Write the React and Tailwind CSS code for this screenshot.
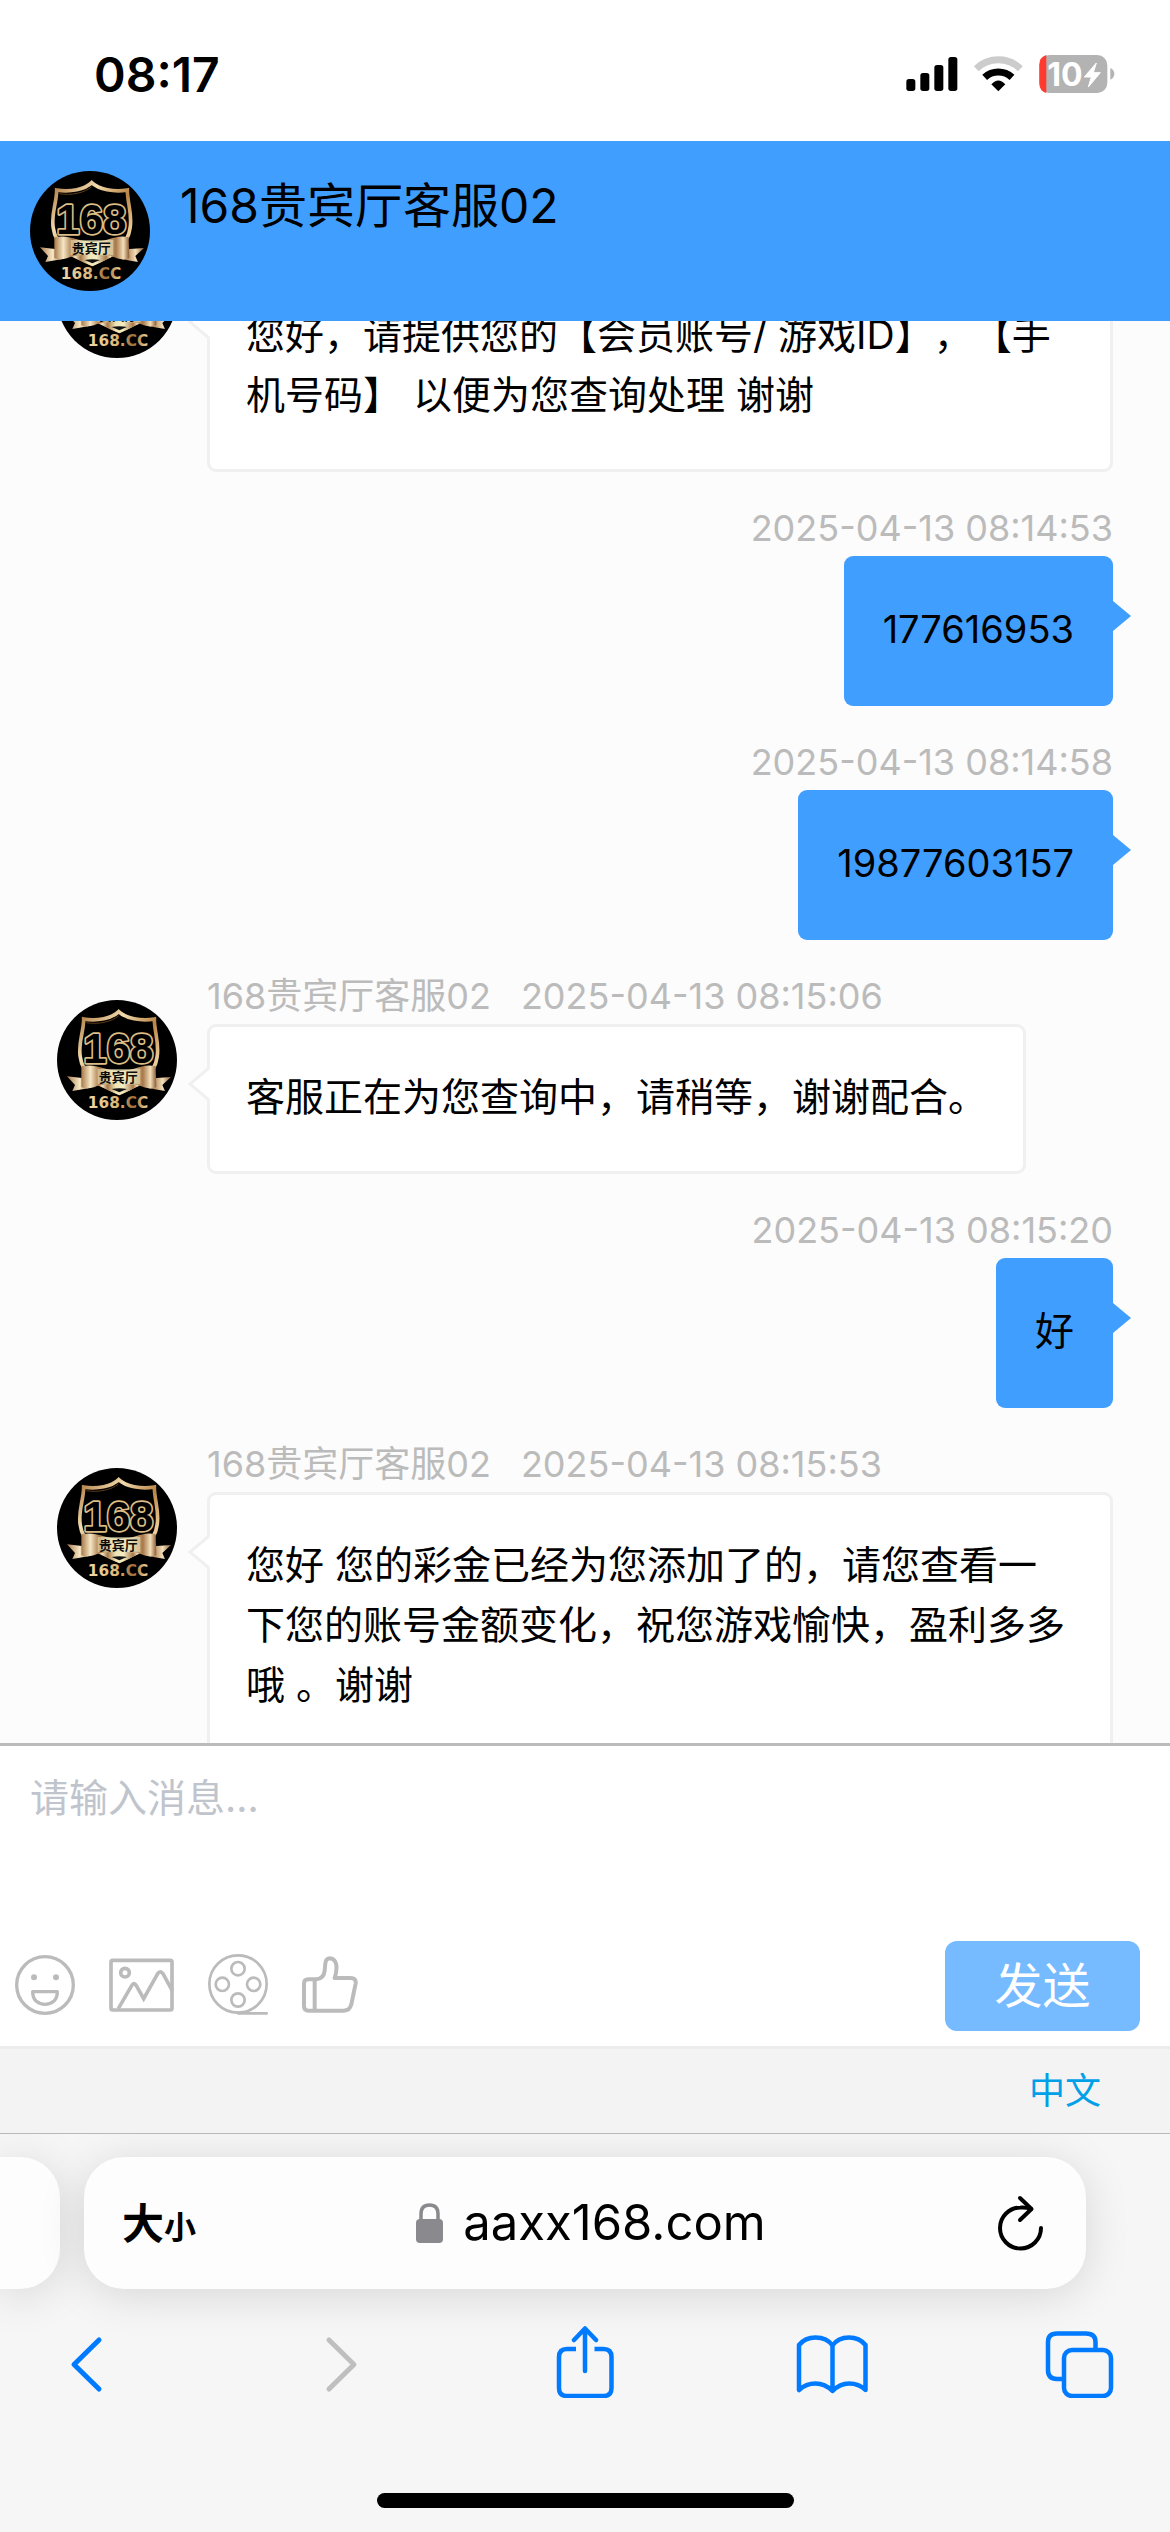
import React from "react";

const messages = [
  {
    from: "agent",
    time: "2025-04-13 08:14:41",
    text: "您好，请提供您的【会员账号/ 游戏ID】，【手机号码】 以便为您查询处理 谢谢",
  },
  { from: "me", time: "2025-04-13 08:14:53", text: "177616953" },
  { from: "me", time: "2025-04-13 08:14:58", text: "19877603157" },
  { from: "agent", time: "2025-04-13 08:15:06", text: "客服正在为您查询中，请稍等，谢谢配合。" },
  { from: "me", time: "2025-04-13 08:15:20", text: "好" },
  {
    from: "agent",
    time: "2025-04-13 08:15:53",
    text: "您好 您的彩金已经为您添加了的，请您查看一下您的账号金额变化，祝您游戏愉快，盈利多多哦 。谢谢",
  },
];

const AGENT = "168贵宾厅客服02";

function Avatar() {
  return (
    <svg viewBox="30 33 360 360" className="size-[120px] shrink-0" role="img" aria-label={AGENT}>
      <defs>
        <linearGradient id="gold" x1="0" y1="0" x2="1" y2="1">
          <stop offset="0" stopColor="#a9733a" />
          <stop offset="0.3" stopColor="#f3dcae" />
          <stop offset="0.55" stopColor="#b98445" />
          <stop offset="0.8" stopColor="#eed09a" />
          <stop offset="1" stopColor="#a06a30" />
        </linearGradient>
        <linearGradient id="ribbon" x1="0" y1="0" x2="1" y2="0">
          <stop offset="0" stopColor="#a8794a" />
          <stop offset="0.12" stopColor="#f6e6c4" />
          <stop offset="0.24" stopColor="#a8794a" />
          <stop offset="0.42" stopColor="#eee3b4" />
          <stop offset="0.6" stopColor="#f3edc4" />
          <stop offset="0.82" stopColor="#a8784a" />
          <stop offset="0.92" stopColor="#f3dfba" />
          <stop offset="1" stopColor="#8a5a32" />
        </linearGradient>
        <linearGradient id="goldText" x1="0" y1="0" x2="1" y2="0">
          <stop offset="0" stopColor="#f0d9a8" />
          <stop offset="0.5" stopColor="#d9b477" />
          <stop offset="0.75" stopColor="#9c6c3a" />
          <stop offset="1" stopColor="#f0d6a0" />
        </linearGradient>
      </defs>
      <circle cx="210" cy="213" r="180" fill="#000" />
      <path
        d="M215 68 C195 88 150 97 110 90 C110 130 92 165 100 205 C106 255 150 285 217 313 C282 285 324 255 330 205 C338 165 322 130 322 90 C282 97 236 88 215 68 Z"
        fill="none"
        stroke="url(#gold)"
        strokeWidth="11"
      />
      <path d="M215 80 C195 99 152 107 118 101" fill="none" stroke="#5d3a17" strokeWidth="3" />
      <text
        x="214"
        y="221"
        textAnchor="middle"
        fontFamily="'Liberation Sans Narrow', 'Liberation Sans', sans-serif"
        fontWeight="700"
        fontSize="126"
        fill="#000"
        stroke="#dcbd86"
        strokeWidth="10"
        strokeLinejoin="round"
        paintOrder="stroke"
      >
        168
      </text>
      <path d="M60 262 L112 268 L124 298 L76 306 L84 288 Z M372 264 L318 268 L306 298 L354 306 L346 288 Z" fill="url(#ribbon)" />
      <path d="M150 288 Q217 276 282 288 L217 318 Z" fill="url(#ribbon)" />
      <path d="M194 300 Q217 296 240 300 L217 310 Z" fill="#111" />
      <path
        d="M103 232 C130 226 152 232 170 238 C200 247 240 247 266 238 C284 232 302 226 326 232 L328 294 C308 304 290 294 272 288 C235 282 198 282 160 288 C142 294 122 304 103 294 Z"
        fill="url(#ribbon)"
      />
      <path d="M152 240 L280 240 L280 286 Q217 274 152 286 Z" fill="#efe8bd" opacity="0.55" />
      <text
        x="214"
        y="280"
        textAnchor="middle"
        fontFamily="'Noto Sans CJK SC', sans-serif"
        fontWeight="700"
        fontSize="39"
        fill="#0d0d0d"
      >
        贵宾厅
      </text>
      <text
        x="213"
        y="357"
        textAnchor="middle"
        fontFamily="'DejaVu Sans', sans-serif"
        fontWeight="700"
        fontSize="46"
        fill="url(#goldText)"
      >
        168.CC
      </text>
    </svg>
  );
}

function AgentMessage({ time, text }) {
  return (
    <li className="flex items-start gap-[30px]">
      <div className="pt-[30px]">
        <Avatar />
      </div>
      <div className="min-w-0">
        <p className="flex h-[54px] gap-[30px] whitespace-nowrap text-[36px] leading-[52px] text-[#bbbbbb]">
          <span>{AGENT}</span>
          <time>{time}</time>
        </p>
        <div className="relative w-fit rounded-[9px] border-[3px] border-[#f0f0f0] bg-white px-[36px] pt-[40px] pb-[44px]">
          <svg viewBox="0 0 24 36" className="absolute top-[39px] -left-[23px] h-[36px] w-[24px]" aria-hidden="true">
            <path d="M24 1 L3 18 L24 35 Z" fill="#ffffff" />
            <path d="M22 2 L3 18 L22 34" fill="none" stroke="#f0f0f0" strokeWidth="3" />
          </svg>
          <p className="text-[39px] leading-[60px] text-black">{text}</p>
        </div>
      </div>
    </li>
  );
}

function MyMessage({ time, text }) {
  const numeric = /^\d+$/.test(text);
  return (
    <li className="flex flex-col items-end">
      <time className="h-[54px] text-[36px] leading-[52px] text-[#bbbbbb]">{time}</time>
      <div className="relative rounded-[9px] bg-[#409eff] px-[39px] pt-[43px] pb-[47px]">
        <svg viewBox="0 0 18 30" className="absolute top-[45px] -right-[18px] h-[30px] w-[18px]" aria-hidden="true">
          <path d="M0 0 L18 15 L0 30 Z" fill="#409eff" />
        </svg>
        <p className={numeric ? "text-[38px] leading-[60px] text-black" : "text-[39px] leading-[60px] text-black"}>{text}</p>
      </div>
    </li>
  );
}

function StatusBar() {
  return (
    <div className="flex h-[141px] shrink-0 items-start justify-between bg-white pt-[45px] pr-[55px] pl-[94px]">
      <span className="text-[48px] leading-[60px] font-semibold text-black">08:17</span>
      <svg viewBox="140 69 627 126" className="mt-[8px] h-[42px] w-[209px]" role="img" aria-label="信号、无线网络、电量 10%">
        <rect x="141" y="147" width="27" height="36" rx="8" />
        <rect x="183" y="129" width="27" height="54" rx="8" />
        <rect x="225" y="105" width="27" height="78" rx="8" />
        <rect x="267" y="81" width="27" height="102" rx="8" />
        <path d="M351 116 A95 95 0 0 1 483 116" fill="none" stroke="#cccccc" strokeWidth="21" />
        <path d="M376 142 A60 60 0 0 1 458 142" fill="none" stroke="#000" strokeWidth="21" />
        <path d="M396 163 Q417 140 438 163 L417 184 Z" />
        <rect x="540" y="75" width="204" height="114" rx="30" fill="#b3b3b3" />
        <path d="M561 75 V189 Q540 183 540 159 V105 Q540 81 561 75 Z" fill="#ff3b30" />
        <path d="M753 114 Q765 120 765 131 Q765 143 753 149 Z" fill="#b3b3b3" />
        <text x="617" y="167" textAnchor="middle" fontFamily="Inter, sans-serif" fontWeight="700" fontSize="96" fill="#fff">
          10
        </text>
        <path d="M711 99 L675 141 H696 L687 171 L723 128 H702 Z" fill="#fff" stroke="#fff" strokeWidth="3" strokeLinejoin="round" />
      </svg>
    </div>
  );
}

const tool = { fill: "none", stroke: "#bbbbbb" };

function Composer() {
  return (
    <form className="shrink-0 border-t-[3px] border-[#bbbbbb] bg-white" onSubmit={(e) => e.preventDefault()}>
      <textarea
        aria-label="请输入消息"
        placeholder="请输入消息..."
        className="block h-[195px] w-full resize-none px-[30px] pt-[22px] text-[39px] leading-[60px] text-black outline-none placeholder:text-[#c0c4cc]"
      />
      <div className="flex h-[105px] items-start justify-between pr-[30px] pl-[15px]">
        <div className="flex h-[87px] items-center gap-[34px]">
          <button type="button" aria-label="表情">
            <svg viewBox="45 102 180 180" className="size-[60px]" {...tool} strokeWidth="10">
              <circle cx="135" cy="192" r="85" />
              <circle cx="102" cy="169" r="9" fill="#bbbbbb" stroke="none" />
              <circle cx="168" cy="169" r="9" fill="#bbbbbb" stroke="none" />
              <path d="M98 212 H172 Q172 230 162 240 Q150 250 135 250 Q120 250 108 240 Q98 230 98 212 Z" strokeLinejoin="round" />
            </svg>
          </button>
          <button type="button" aria-label="图片">
            <svg viewBox="325 112 195 162" className="h-[54px] w-[65px]" {...tool} strokeWidth="11">
              <rect x="331" y="119" width="183" height="149" rx="5" />
              <circle cx="373" cy="156" r="13" />
              <path d="M353 264 L393 195 Q400 183 407 195 L429 234 L471 159 Q479 148 487 159 L516 212" />
            </svg>
          </button>
          <button type="button" aria-label="视频">
            <svg viewBox="624 102 180 183" className="h-[61px] w-[60px]" {...tool} strokeWidth="8">
              <circle cx="714" cy="192" r="86" />
              <circle cx="714" cy="146" r="20" />
              <circle cx="667" cy="193" r="20" />
              <circle cx="761" cy="193" r="20" />
              <circle cx="714" cy="240" r="20" />
              <path d="M714 280 H800" strokeLinecap="round" />
            </svg>
          </button>
          <button type="button" aria-label="评价">
            <svg viewBox="900 108 168 171" className="h-[57px] w-[56px]" {...tool} strokeWidth="12" strokeLinejoin="round">
              <path d="M998 174 H1046 Q1063 174 1061 190 L1048 253 Q1043 272 1026 272 H920 Q906 272 906 258 V191 Q906 178 920 178 H943 Q966 176 968 152 L970 130 Q972 115 984 115 Q1000 117 1003 135 Q1005 155 998 174 Z" />
              <path d="M938 180 V270" />
            </svg>
          </button>
        </div>
        <button type="submit" className="h-[90px] w-[195px] rounded-[12px] bg-[#76baff] text-[48px] leading-[90px] text-white">
          发送
        </button>
      </div>
      <div className="flex h-[87px] items-center justify-end border-t-[3px] border-[#ececec] bg-[#f3f3f3] pr-[69px]">
        <a href="#lang" className="text-[36px] leading-[54px] text-[#00a0e9]">
          中文
        </a>
      </div>
    </form>
  );
}

const nav = { fill: "none", stroke: "#007aff", strokeWidth: 4.5, strokeLinecap: "round", strokeLinejoin: "round" };

function BrowserBar() {
  return (
    <footer className="shrink-0 overflow-hidden border-t border-[#b9b9b9] bg-[#f6f6f6] pt-[23px] pb-[24px]">
      <div className="flex gap-[24px] pr-[84px]">
        <div className="h-[132px] w-[60px] shrink-0 rounded-r-[40px] bg-[#fdfdfd] shadow-[0_6px_45px_rgba(0,0,0,0.13)]" />
        <div className="flex h-[132px] flex-1 items-center justify-between rounded-[40px] bg-[#fdfdfd] pr-[42px] pl-[38px] shadow-[0_6px_45px_rgba(0,0,0,0.13)]">
          <button type="button" className="flex items-baseline pt-[6px] font-bold text-black">
            <span className="text-[42px] leading-[60px]">大</span>
            <span className="text-[32px] leading-[60px]">小</span>
          </button>
          <div className="flex items-center gap-[20px]">
            <svg viewBox="0 0 27 40" className="h-[40px] w-[27px]" aria-hidden="true">
              <path d="M5 18 V11 Q5 2 13.5 2 Q22 2 22 11 V18" fill="none" stroke="#8a8a8e" strokeWidth="3.5" />
              <rect x="0" y="16" width="27" height="24" rx="4" fill="#8a8a8e" />
            </svg>
            <a href="#site" className="text-[49px] leading-[66px] text-black">
              aaxx168.com
            </a>
          </div>
          <button type="button" aria-label="重新载入" className="flex w-[58px] justify-end">
            <svg viewBox="0 0 46 56" className="h-[56px] w-[46px]" fill="none" stroke="#000" strokeWidth="4" strokeLinecap="round" strokeLinejoin="round">
              <path d="M43 33 A20.5 20.5 0 1 1 22.5 12.5 Q28 12 33 14" />
              <path d="M22 3 L33.5 14 L22 25" />
            </svg>
          </button>
        </div>
      </div>
      <nav className="mt-[37px] flex justify-between px-[55px]">
        <button type="button" aria-label="后退">
          <svg viewBox="55 2326 72 72" className="size-[72px]" {...nav} strokeWidth="5">
            <path d="M99 2340 L74 2364.5 L99 2389" />
          </svg>
        </button>
        <button type="button" aria-label="前进">
          <svg viewBox="302 2326 72 72" className="size-[72px]" {...nav} stroke="#bfbfbf" strokeWidth="5">
            <path d="M329 2340 L354 2364.5 L329 2389" />
          </svg>
        </button>
        <button type="button" aria-label="共享">
          <svg viewBox="549 2326 72 72" className="size-[72px]" {...nav}>
            <path d="M576 2349 H567 Q559 2349 559 2357 V2388 Q559 2396 567 2396 H603.5 Q611.5 2396 611.5 2388 V2357 Q611.5 2349 603.5 2349 H594.5" strokeLinecap="butt" />
            <path d="M585 2371 V2329 M574 2340 L585 2328.5 L596 2340" />
          </svg>
        </button>
        <button type="button" aria-label="书签">
          <svg viewBox="796 2326 72 72" className="size-[72px]" {...nav}>
            <path d="M832.5 2378 V2391 Q825 2383.5 815.5 2383.5 Q806 2383.5 799 2390 V2345 Q805 2337.5 815.5 2337.5 Q827 2337.5 832.5 2345.5 V2378 M832.5 2345.5 Q838 2337.5 849 2337.5 Q859.5 2337.5 865.5 2345 V2390 Q859 2383.5 849 2383.5 Q840 2383.5 832.5 2391" />
          </svg>
        </button>
        <button type="button" aria-label="标签页">
          <svg viewBox="1043 2326 72 72" className="size-[72px]" {...nav}>
            <path d="M1062 2379 H1057 Q1048 2379 1048 2370 V2342 Q1048 2333.5 1057 2333.5 H1086 Q1095.5 2333.5 1095.5 2342 V2348" strokeLinecap="butt" />
            <rect x="1064" y="2350" width="47" height="46" rx="8" />
          </svg>
        </button>
      </nav>
      <div className="mx-auto mt-[95px] h-[15px] w-[417px] rounded-full bg-black" />
    </footer>
  );
}

export default function App() {
  return (
    <div
      className="flex h-screen flex-col bg-white font-['Inter','Noto_Sans_CJK_SC',sans-serif] [text-spacing-trim:space-all]"
      lang="zh-CN"
    >
      <StatusBar />
      <header className="flex h-[180px] shrink-0 items-start gap-[30px] bg-[#409eff] p-[30px]">
        <Avatar />
        <h1 className="text-[48px] leading-[69px] text-black">{AGENT}</h1>
      </header>
      <main className="min-h-0 flex-1 overflow-hidden bg-[#fcfcfc]">
        <ul className="-mt-[113px] flex flex-col gap-[30px] px-[57px]">
          {messages.map((m) =>
            m.from === "agent" ? <AgentMessage key={m.time} {...m} /> : <MyMessage key={m.time} {...m} />
          )}
        </ul>
      </main>
      <Composer />
      <BrowserBar />
    </div>
  );
}
